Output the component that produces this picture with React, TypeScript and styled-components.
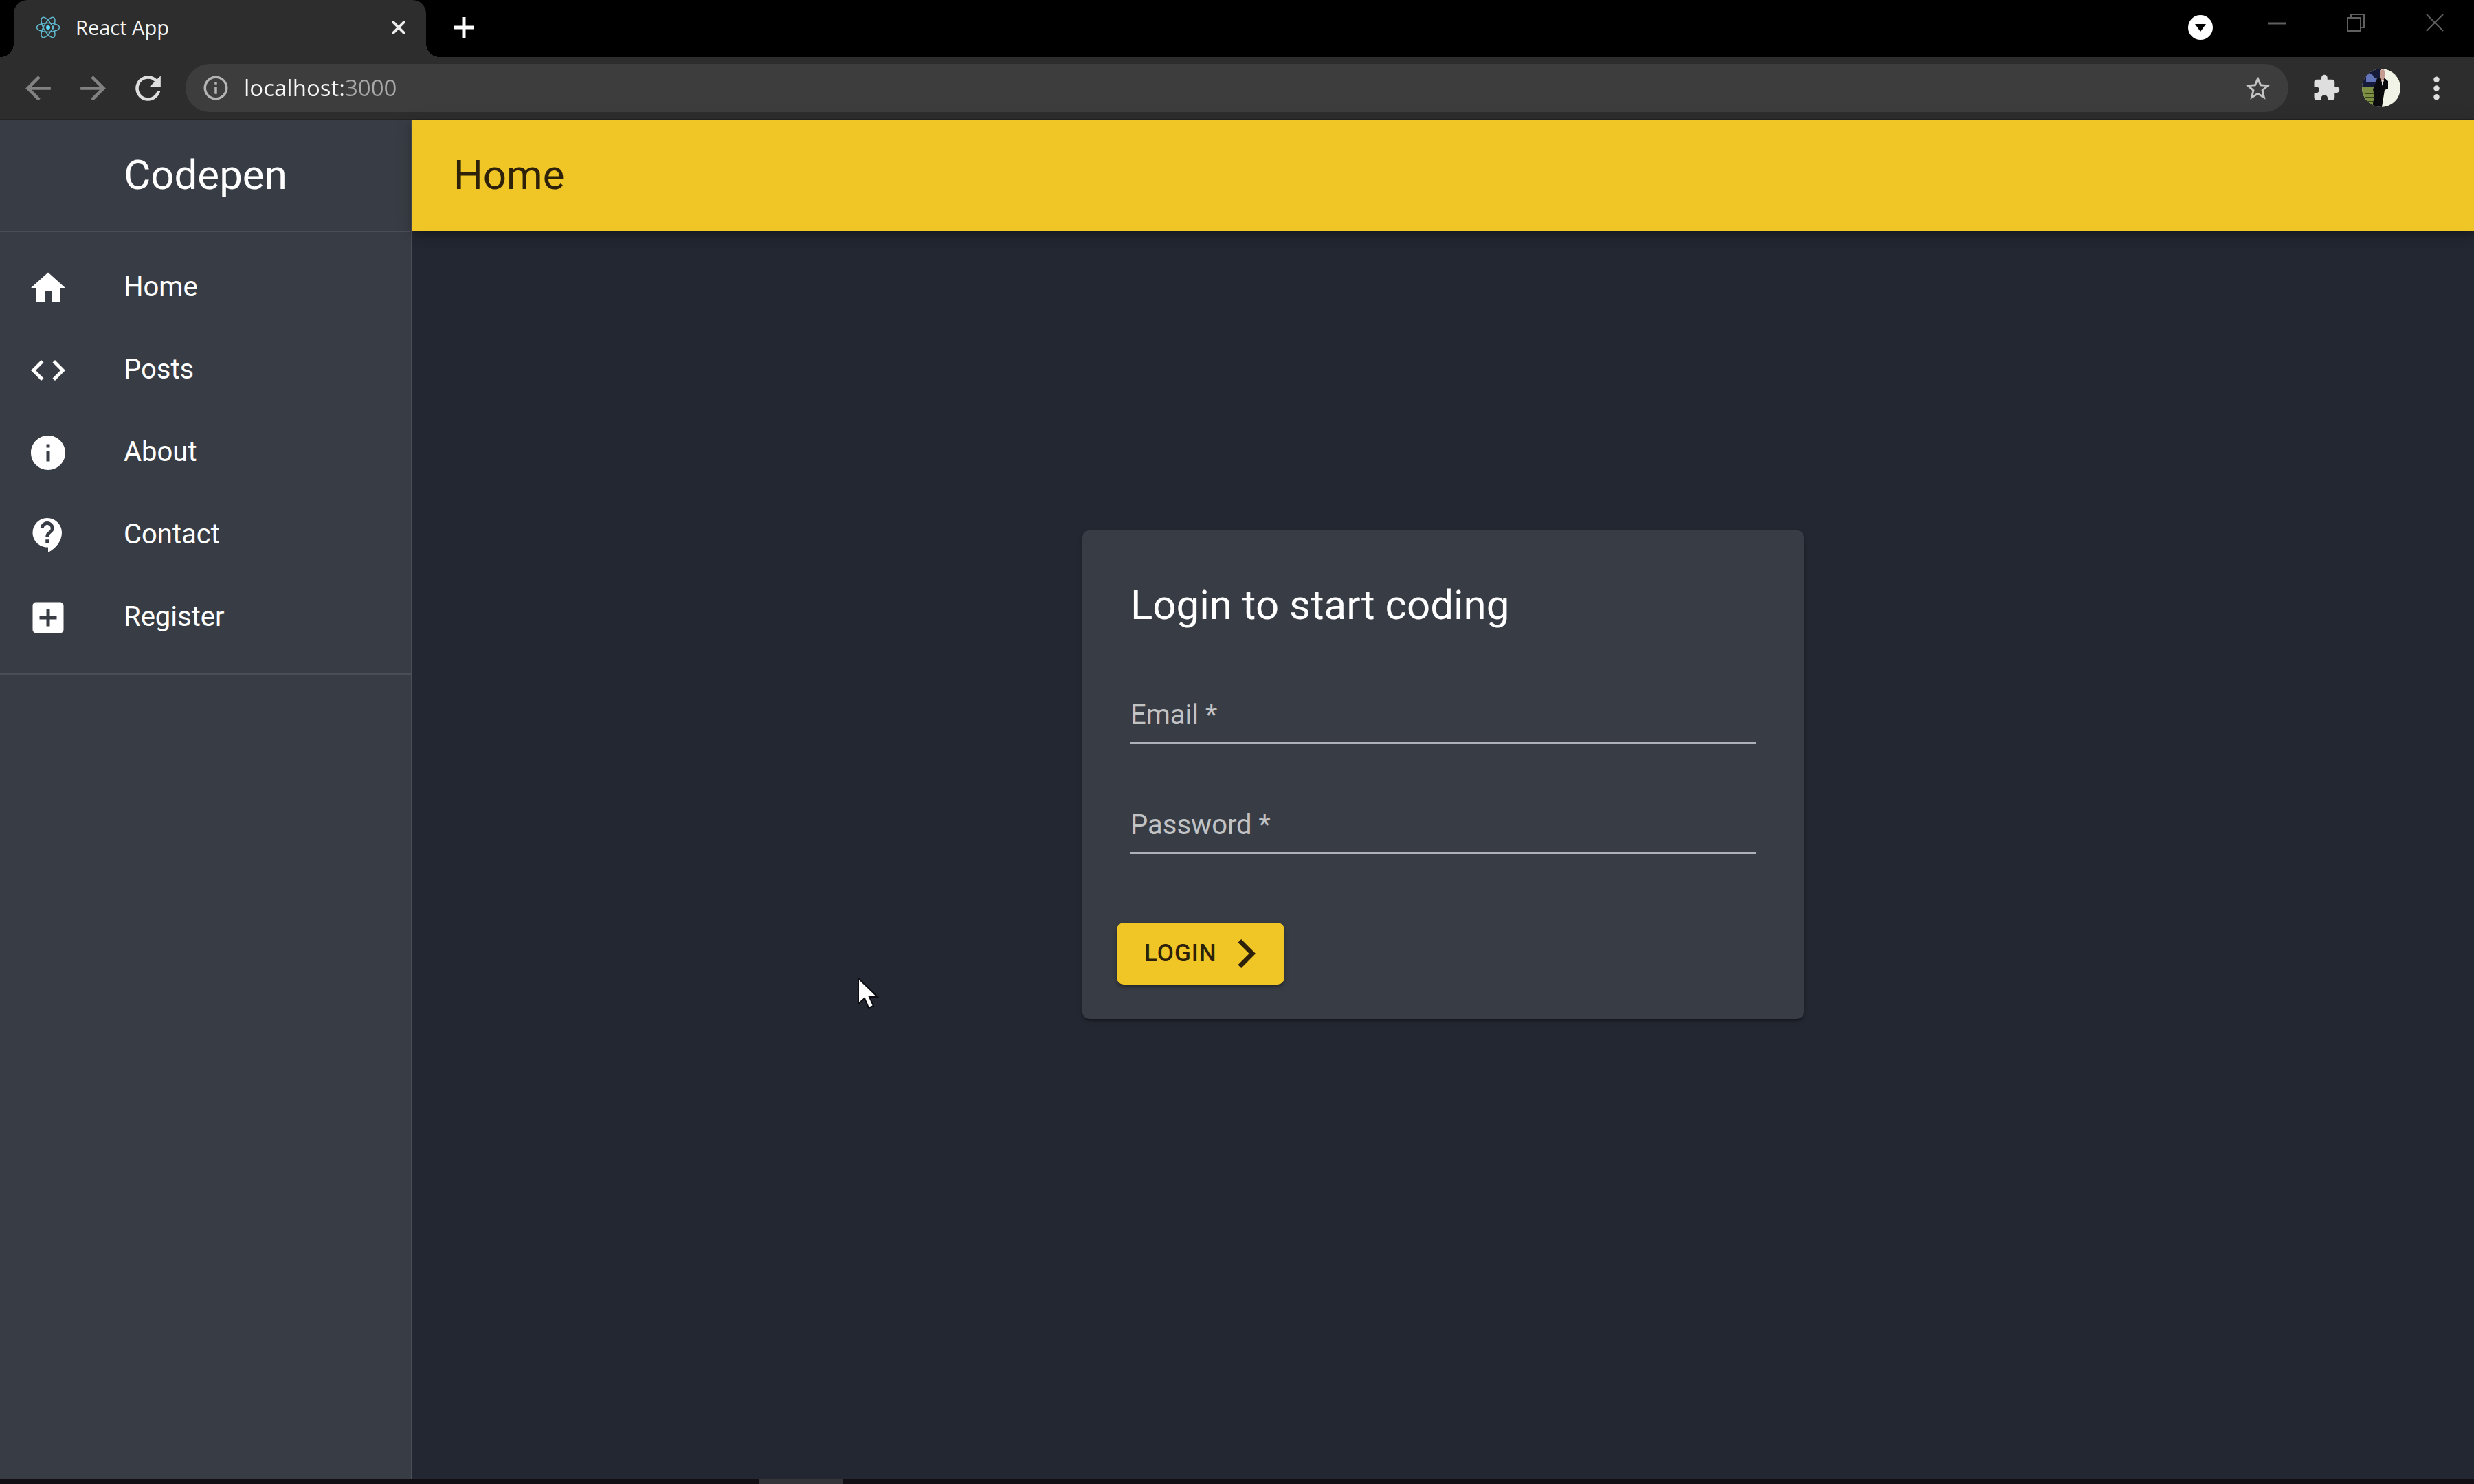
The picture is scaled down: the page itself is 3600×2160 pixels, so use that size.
import React from 'react';
import styled, { createGlobalStyle } from 'styled-components';
import {
  MdAddBox,
  MdArrowBack,
  MdArrowForward,
  MdCode,
  MdContactSupport,
  MdExtension,
  MdHome,
  MdInfo,
  MdInfoOutline,
  MdMoreVert,
  MdRefresh,
  MdStarBorder,
} from 'react-icons/md';

const color = {
  page: '#232731',
  paper: '#383c44',
  divider: '#4a4e57',
  accent: '#f0c626',
  onAccent: '#2e2109',
  chrome: '#2d2d2d',
  pill: '#3d3d3d',
};

const GlobalStyle = createGlobalStyle`
  *, *::before, *::after { box-sizing: border-box; }
  body {
    margin: 0;
    background: ${color.page};
    color: #fff;
    font-family: Roboto, "Liberation Sans", sans-serif;
    font-size: 40px;
  }
  button { border: 0; padding: 0; background: none; color: inherit; font: inherit; cursor: pointer; }
  svg { display: block; flex: none; }
`;

const Window = styled.div`
  display: flex;
  flex-direction: column;
  min-height: 100vh;
`;

/* ---------- browser frame ---------- */

const TabStrip = styled.div`
  display: flex;
  align-items: flex-start;
  height: 83px;
  padding-left: 20px;
  background: #000;
  font-family: "Open Sans", "Noto Sans", sans-serif;
`;

const Tab = styled.div`
  position: relative;
  display: flex;
  align-items: center;
  width: 600px;
  height: 83px;
  padding: 0 20px 4px 32px;
  border-radius: 20px 20px 0 0;
  background: ${color.chrome};

  &::before,
  &::after {
    content: '';
    position: absolute;
    bottom: 0;
    width: 20px;
    height: 20px;
  }
  &::before {
    right: 100%;
    background: radial-gradient(circle at 0 0, transparent 20px, ${color.chrome} 20px);
  }
  &::after {
    left: 100%;
    background: radial-gradient(circle at 100% 0, transparent 20px, ${color.chrome} 20px);
  }
`;

const TabTitle = styled.span`
  flex: 1;
  padding-left: 22px;
  font-size: 29px;
  line-height: 40px;
  color: #f4f4f4;
`;

const IconButton = styled.button<{ $width?: number; $height?: number; $tone?: string }>`
  display: flex;
  flex: none;
  align-items: center;
  justify-content: center;
  width: ${(p) => p.$width ?? 60}px;
  height: ${(p) => p.$height ?? 60}px;
  color: ${(p) => p.$tone ?? '#dededf'};
`;

const NewTab = styled(IconButton)`
  margin-left: 25px;
`;

const WindowControls = styled.div`
  display: flex;
  margin-left: auto;
`;

const MediaButton = styled(IconButton)`
  margin-right: 23px;
`;

const Toolbar = styled.div`
  display: flex;
  align-items: center;
  gap: 20px;
  height: 92px;
  padding: 10px 25px;
  border-bottom: 2px solid #24231f;
  background: ${color.chrome};
`;

const AddressBar = styled.div`
  display: flex;
  flex: 1;
  align-items: center;
  height: 70px;
  margin: 0 5px;
  padding: 0 15px 0 23px;
  border-radius: 35px;
  background: ${color.pill};
  color: #b4b4b4;
`;

/* The host is bright and the port is dimmed, as the browser paints it. */
const Address = styled.input`
  flex: 1;
  min-width: 0;
  margin-left: 20px;
  padding: 0;
  border: 0;
  outline: 0;
  background: linear-gradient(90deg, #f7f7f7 146px, #a8a8a8 146px);
  background-clip: text;
  -webkit-background-clip: text;
  color: transparent;
  font-family: "Open Sans", "Noto Sans", sans-serif;
  font-size: 33px;
  line-height: 50px;
`;

/* ---------- application ---------- */

const Layout = styled.div`
  display: grid;
  flex: 1;
  grid-template-columns: 600px 1fr;
`;

const Drawer = styled.aside`
  border-right: 2px solid ${color.divider};
  background: ${color.paper};
`;

const Brand = styled.div`
  height: 163px;
  border-bottom: 2px solid ${color.divider};
  font-size: 60px;
  line-height: 160px;
  text-align: center;
`;

const NavList = styled.ul`
  margin: 0;
  padding: 21px 0;
  border-bottom: 2px solid ${color.divider};
  list-style: none;
`;

const NavLink = styled.a`
  display: flex;
  align-items: center;
  gap: 80px;
  height: 120px;
  padding: 0 40px;
  color: #fff;
  line-height: 60px;
  text-decoration: none;
`;

const NavText = styled.span`
  padding-bottom: 2px;
`;

const Main = styled.main`
  display: flex;
  flex-direction: column;
  min-width: 0;
`;

const AppBar = styled.header`
  padding: 0 60px;
  background: ${color.accent};
  box-shadow: 0 5px 10px -3px rgba(0, 0, 0, 0.2), 0 10px 12px 0 rgba(0, 0, 0, 0.14),
    0 2px 25px 0 rgba(0, 0, 0, 0.12);
  color: ${color.onAccent};
`;

const PageTitle = styled.h1`
  margin: 0;
  padding-bottom: 1px;
  font-size: 60px;
  font-weight: 400;
  line-height: 160px;
`;

const Content = styled.section`
  display: flex;
  flex: 1;
  align-items: center;
  justify-content: center;
  padding-bottom: 234px;
`;

const Card = styled.form`
  width: 1050px;
  padding: 70px 70px 50px;
  border-radius: 10px;
  background: ${color.paper};
  box-shadow: 0 5px 3px -3px rgba(0, 0, 0, 0.2), 0 3px 3px 0 rgba(0, 0, 0, 0.14),
    0 3px 8px 0 rgba(0, 0, 0, 0.12);
`;

const CardTitle = styled.h2`
  margin: 0;
  padding-bottom: 3px;
  font-size: 60px;
  font-weight: 400;
  line-height: 78px;
`;

const Field = styled.div`
  display: grid;
  margin-top: 80px;
`;

const FieldLabel = styled.label`
  grid-area: 1 / 1;
  justify-self: start;
  line-height: 76px;
  color: rgba(255, 255, 255, 0.7);
  pointer-events: none;
`;

const FieldInput = styled.input`
  grid-area: 1 / 1;
  width: 100%;
  height: 80px;
  padding: 0;
  border: 0;
  border-bottom: 3px solid #aeb1b8;
  border-radius: 0;
  outline: 0;
  background: transparent;
  color: #fff;
  font: inherit;
`;

const LoginButton = styled.button`
  display: flex;
  align-items: center;
  gap: 18px;
  height: 90px;
  margin: 100px 0 0 -20px;
  padding: 0 30px 0 40px;
  border-radius: 10px;
  background: ${color.accent};
  box-shadow: 0 5px 3px -3px rgba(0, 0, 0, 0.2), 0 4px 5px 0 rgba(0, 0, 0, 0.14),
    0 2px 10px 0 rgba(0, 0, 0, 0.12);
  color: ${color.onAccent};
  font-size: 35px;
  font-weight: 500;
  letter-spacing: 1px;
  line-height: 60px;
`;

const Taskbar = styled.footer`
  height: 8px;
  padding-left: 1105px;
  background: #110e14;
`;

const ActiveTask = styled.div`
  width: 121px;
  height: 8px;
  background: #353439;
`;

const Pointer = styled.svg`
  position: absolute;
  top: 1420px;
  left: 1245px;
  pointer-events: none;
`;

/* ---------- drawings ---------- */

const ReactLogo = () => (
  <svg width="36" height="36" viewBox="-12 -12 24 24" fill="none" stroke="#61b9cf">
    <circle r="2" fill="#61dafb" stroke="none" />
    <ellipse rx="11" ry="4.3" />
    <ellipse rx="11" ry="4.3" transform="rotate(60)" />
    <ellipse rx="11" ry="4.3" transform="rotate(120)" />
  </svg>
);

const Chevron = () => (
  <svg width="50" height="50" viewBox="0 0 24 24" fill="none" stroke="currentColor" strokeWidth="3.2">
    <path d="M7.1 3.1L16 12l-8.9 8.9" />
  </svg>
);

const Avatar = () => (
  <svg width="56" height="56" viewBox="0 0 56 56">
    <defs>
      <clipPath id="avatar">
        <circle cx="28" cy="28" r="28" />
      </clipPath>
    </defs>
    <g clipPath="url(#avatar)">
      <path d="M0 0h56v56H0z" fill="#f1f3e6" />
      <path d="M0 0h27v26H0z" fill="#141a38" />
      <path d="M6 9l8-2 4 6 4 1-3 6H6z" fill="#6474b8" />
      <path d="M0 26h20v30H0z" fill="#7d8f43" />
      <path d="M4 36h14M5 42h13M8 48h10" stroke="#3c461c" strokeWidth="2" />
      <path d="M23 14l9-1 6 5v11l-5 2-4 25H15l3-16-2-10z" fill="#0b0a0c" />
      <path d="M26 2l6-1 2 6-2 8-3 5-3-7z" fill="#c59a90" />
      <path d="M29 16l3 1-3 8z" fill="#e9e4e2" />
    </g>
  </svg>
);

const navItems = [
  { label: 'Home', Icon: MdHome },
  { label: 'Posts', Icon: MdCode },
  { label: 'About', Icon: MdInfo },
  { label: 'Contact', Icon: MdContactSupport },
  { label: 'Register', Icon: MdAddBox },
];

const BrowserFrame = () => (
  <>
    <TabStrip>
      <Tab>
        <ReactLogo />
        <TabTitle>React App</TabTitle>
        <IconButton $width={40} $height={40} aria-label="Close tab">
          <svg width="20" height="20" viewBox="0 0 20 20" stroke="#ececec" strokeWidth="4">
            <path d="M1 1l18 18M19 1L1 19" />
          </svg>
        </IconButton>
      </Tab>
      <NewTab $height={80} aria-label="New tab">
        <svg width="30" height="30" viewBox="0 0 30 30" stroke="#fff" strokeWidth="5">
          <path d="M15 0v30M0 15h30" />
        </svg>
      </NewTab>
      <WindowControls>
        <MediaButton $height={80} aria-label="Search tabs">
          <svg width="36" height="36" viewBox="0 0 36 36">
            <circle cx="18" cy="18" r="18" fill="#fff" />
            <path d="M10 13h16l-8 11z" fill="#000" />
          </svg>
        </MediaButton>
        <IconButton $width={115} $height={66} aria-label="Minimize">
          <svg width="26" height="26" viewBox="0 0 26 26" stroke="#5f5f5f" strokeWidth="3">
            <path d="M0 14h26" />
          </svg>
        </IconButton>
        <IconButton $width={115} $height={66} aria-label="Restore">
          <svg width="26" height="26" viewBox="0 0 26 26" fill="none" stroke="#5f5f5f" strokeWidth="2">
            <path d="M1 6h19v19H1zM6 6V1h19v19h-5" />
          </svg>
        </IconButton>
        <IconButton $width={115} $height={66} aria-label="Close">
          <svg width="26" height="26" viewBox="0 0 26 26" stroke="#5f5f5f" strokeWidth="2">
            <path d="M1 1l24 24M25 1L1 25" />
          </svg>
        </IconButton>
      </WindowControls>
    </TabStrip>
    <Toolbar>
      <IconButton $tone="#828282" aria-label="Back">
        <MdArrowBack size={55} />
      </IconButton>
      <IconButton $tone="#828282" aria-label="Forward">
        <MdArrowForward size={55} />
      </IconButton>
      <IconButton aria-label="Reload">
        <MdRefresh size={55} />
      </IconButton>
      <AddressBar>
        <MdInfoOutline size={42} />
        <Address aria-label="Address" defaultValue="localhost:3000" spellCheck={false} />
        <IconButton $tone="#c4c4c4" aria-label="Bookmark this page">
          <MdStarBorder size={43} />
        </IconButton>
      </AddressBar>
      <IconButton aria-label="Extensions">
        <MdExtension size={42} />
      </IconButton>
      <IconButton aria-label="Profile">
        <Avatar />
      </IconButton>
      <IconButton aria-label="Menu">
        <MdMoreVert size={51} />
      </IconButton>
    </Toolbar>
  </>
);

export default function App() {
  return (
    <Window>
      <GlobalStyle />
      <BrowserFrame />
      <Layout>
        <Drawer>
          <Brand>Codepen</Brand>
          <nav>
            <NavList>
              {navItems.map(({ label, Icon }) => (
                <li key={label}>
                  <NavLink href={`#${label.toLowerCase()}`}>
                    <Icon size={60} />
                    <NavText>{label}</NavText>
                  </NavLink>
                </li>
              ))}
            </NavList>
          </nav>
        </Drawer>
        <Main>
          <AppBar>
            <PageTitle>Home</PageTitle>
          </AppBar>
          <Content>
            <Card onSubmit={(e: React.FormEvent) => e.preventDefault()}>
              <CardTitle>Login to start coding</CardTitle>
              <Field>
                <FieldInput id="email" type="email" required />
                <FieldLabel htmlFor="email">Email *</FieldLabel>
              </Field>
              <Field>
                <FieldInput id="password" type="password" required />
                <FieldLabel htmlFor="password">Password *</FieldLabel>
              </Field>
              <LoginButton type="submit">
                LOGIN
                <Chevron />
              </LoginButton>
            </Card>
          </Content>
        </Main>
      </Layout>
      <Taskbar>
        <ActiveTask />
      </Taskbar>
      <Pointer width="36" height="50" viewBox="0 0 36 50">
        <path
          d="M4 4v37l9-8 6 14 7-3-6-13h12z"
          fill="#fff"
          stroke="#0c0d12"
          strokeWidth="2"
        />
      </Pointer>
    </Window>
  );
}
